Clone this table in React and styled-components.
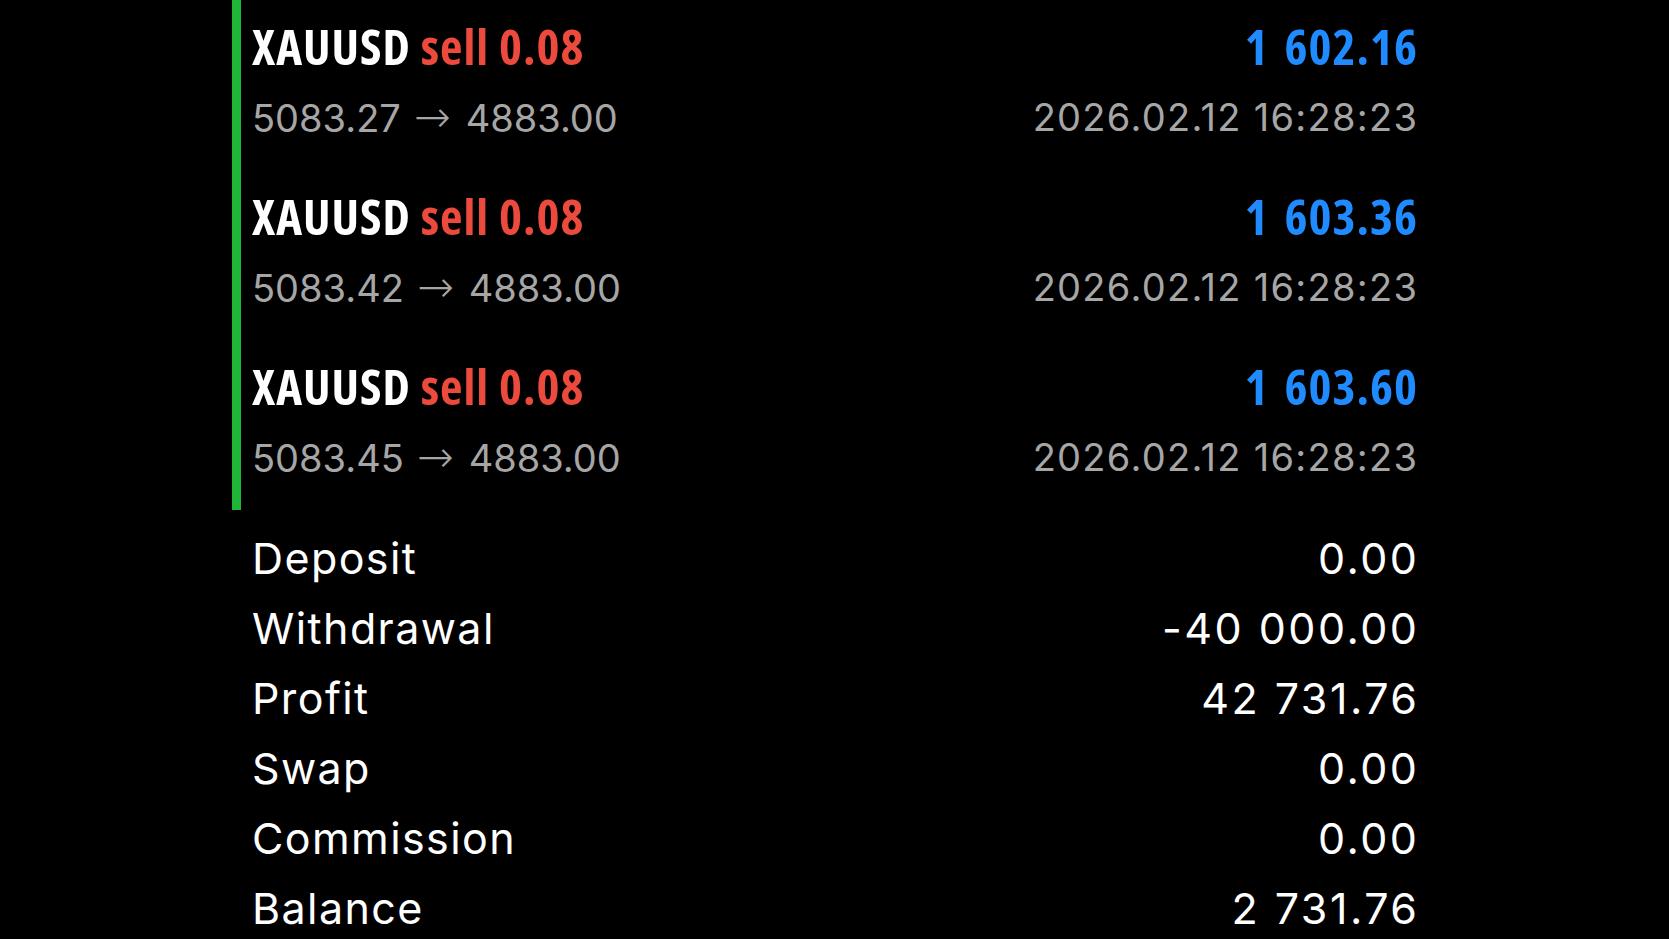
import React from 'react';
import styled, { createGlobalStyle } from 'styled-components';

const trades = [
  { symbol: 'XAUUSD', side: 'sell', lots: '0.08', open: '5083.27', close: '4883.00', profit: '1 602.16', time: '2026.02.12 16:28:23' },
  { symbol: 'XAUUSD', side: 'sell', lots: '0.08', open: '5083.42', close: '4883.00', profit: '1 603.36', time: '2026.02.12 16:28:23' },
  { symbol: 'XAUUSD', side: 'sell', lots: '0.08', open: '5083.45', close: '4883.00', profit: '1 603.60', time: '2026.02.12 16:28:23' },
];

const totals = [
  ['Deposit', '0.00'],
  ['Withdrawal', '-40 000.00'],
  ['Profit', '42 731.76'],
  ['Swap', '0.00'],
  ['Commission', '0.00'],
  ['Balance', '2 731.76'],
];

export default function App() {
  return (
    <>
      <GlobalStyle />
      <Page>
        <TradeList>
          {trades.map((t, i) => (
            <TradeRow key={i}>
              <TitleLine>
                <Symbol>
                  {t.symbol} <Side>{t.side} {t.lots}</Side>
                </Symbol>
                <Amount>{t.profit}</Amount>
              </TitleLine>
              <SubLine>
                <span>{t.open}<Arrow>→</Arrow>{t.close}</span>
                <Timestamp>{t.time}</Timestamp>
              </SubLine>
            </TradeRow>
          ))}
        </TradeList>
        <Summary>
          {totals.map(([label, value]) => (
            <SummaryRow key={label}>
              <Label>{label}</Label>
              <Value>{value}</Value>
            </SummaryRow>
          ))}
        </Summary>
      </Page>
    </>
  );
}

const GlobalStyle = createGlobalStyle`
  html, body {
    margin: 0;
    height: 100%;
    background: #000;
    overflow: hidden;
  }
`

const Page = styled.div`
  width: 1185px;
  padding-left: 232px;
  background: #000;
`

const TradeList = styled.div`
  border-left: 9px solid #1fb536;
  padding-left: 11px;
`

const TradeRow = styled.div`
  padding: 18px 0 29px;
`

const TitleLine = styled.div`
  display: flex;
  justify-content: space-between;
  height: 56px;
  line-height: 56px;
  font-family: "Open Sans", sans-serif;
  font-stretch: 75%;
  font-weight: 700;
  font-size: 49px;
  letter-spacing: 1px;
`

const Symbol = styled.span`
  color: #fff;
`

const Side = styled.span`
  color: #ec4a3c;
`

const Amount = styled.span`
  color: #1f8bff;
  word-spacing: 6px;
  margin-right: -1px;
`

const SubLine = styled.div`
  display: flex;
  justify-content: space-between;
  margin-top: 19px;
  height: 48px;
  line-height: 48px;
  font-family: Inter, "Liberation Sans", sans-serif;
  font-size: 38px;
  color: #a6a6a6;
`

const Arrow = styled.span`
  display: inline-block;
  margin: 0 15px 0 13px;
  font-family: "DejaVu Sans", sans-serif;
  font-weight: 200;
  font-size: 44px;
`

const Timestamp = styled.span`
  letter-spacing: 1.3px;
  margin-right: -1.3px;
`

const Summary = styled.div`
  margin-top: 13px;
  padding-left: 20px;
`

const SummaryRow = styled.div`
  display: flex;
  justify-content: space-between;
  height: 70px;
  line-height: 70px;
  font-family: Inter, "Liberation Sans", sans-serif;
  font-size: 43px;
  color: #fff;
`

const Label = styled.span`
  letter-spacing: 1.4px;
`

const Value = styled.span`
  letter-spacing: 2.5px;
  margin-right: -2.5px;
`
